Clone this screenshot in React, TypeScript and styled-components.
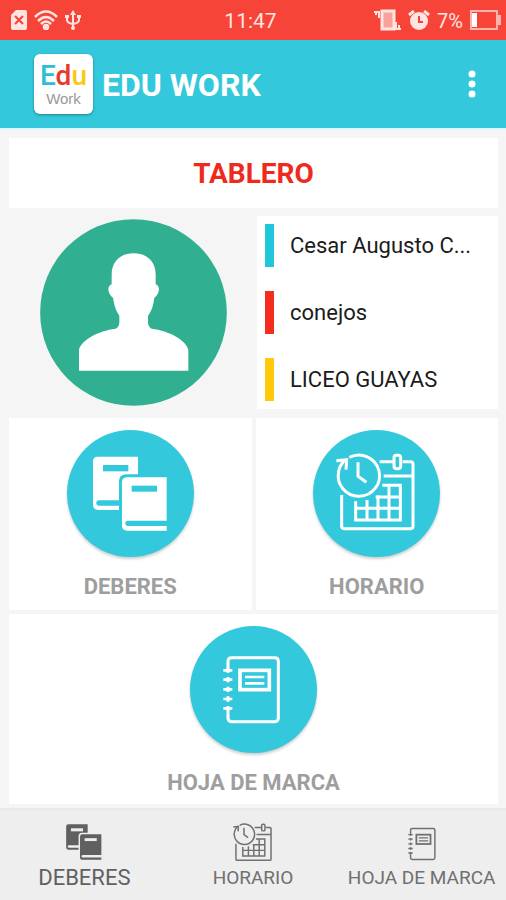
import React from "react";
import styled, { createGlobalStyle } from "styled-components";

const CYAN = "#34c8dc";
const RED = "#f74438";
const PAGE = "#f5f5f5";
const NAV = "#eeeeee";

const GlobalStyle = createGlobalStyle`
  * { box-sizing: border-box; }
  body { margin: 0; background: ${PAGE}; font-family: Roboto, sans-serif; }
  button { font: inherit; border: 0; margin: 0; padding: 0; cursor: pointer; }
  svg { display: block; flex: none; }
`;

const Screen = styled.div`
  min-height: 100vh;
  display: flex;
  flex-direction: column;
`;

const StatusBar = styled.div`
  height: 40px;
  padding: 0 5px 0 0;
  display: grid;
  grid-template-columns: 1fr auto 1fr;
  align-items: center;
  background: ${RED};
  color: #ffe4e1;
`;

const StatusGroup = styled.div<{ $end?: boolean }>`
  display: flex;
  align-items: center;
  gap: 7px;
  padding-left: ${(p) => (p.$end ? 0 : 11)}px;
  justify-content: ${(p) => (p.$end ? "flex-end" : "flex-start")};
`;

const StatusText = styled.span<{ $size: number }>`
  font-size: ${(p) => p.$size}px;
  line-height: 24px;
  padding-top: 2px;
`;

const AppBar = styled.header`
  height: 90px;
  padding: 0 24px 0 34px;
  display: flex;
  align-items: center;
  gap: 9px;
  background: ${CYAN};
  border-bottom: 2px solid #dff6fa;
`;

const Logo = styled.div`
  width: 59px;
  height: 60px;
  padding-top: 9px;
  border-radius: 6px;
  background: #fff;
  box-shadow: 0 1px 3px rgba(0, 0, 0, 0.35);
  text-align: center;
`;

const LogoTop = styled.div`
  font-size: 28px;
  line-height: 26px;
  font-weight: 500;
`;

const LogoLetter = styled.span<{ $color: string }>`
  color: ${(p) => p.$color};
`;

const LogoBottom = styled.div`
  font-family: "Liberation Sans", sans-serif;
  font-size: 15px;
  line-height: 20px;
  color: #999;
`;

const AppTitle = styled.h1`
  margin: 0;
  padding-top: 2px;
  flex: 1;
  font-size: 32px;
  line-height: 40px;
  font-weight: 700;
  color: #fff;
`;

const MenuButton = styled.button`
  width: 20px;
  height: 40px;
  display: flex;
  align-items: center;
  justify-content: center;
  background: none;
  color: #fff;
`;

const Content = styled.main`
  flex: 1;
  padding: 8px 8px 4px 9px;
  display: flex;
  flex-direction: column;
`;

const Heading = styled.h2`
  margin: 0 0 8px;
  padding: 19px 0 17px;
  background: #fff;
  color: #ee2a1c;
  text-align: center;
  font-size: 28px;
  line-height: 34px;
  font-weight: 700;
`;

const Profile = styled.section`
  display: grid;
  grid-template-columns: minmax(0, 248fr) minmax(0, 241fr);
  align-items: center;
  margin-bottom: 9px;
`;

const AvatarCell = styled.div`
  display: flex;
  justify-content: center;
`;

const InfoList = styled.ul`
  margin: 0;
  padding: 8px;
  list-style: none;
  background: #fff;
  display: flex;
  flex-direction: column;
  gap: 24px;
`;

const InfoItem = styled.li<{ $color: string }>`
  height: 43px;
  border-left: 9px solid ${(p) => p.$color};
  padding: 0 16px;
  font-size: 22px;
  line-height: 43px;
  color: #1b1b1b;
  white-space: nowrap;
  overflow: hidden;
  text-overflow: ellipsis;
`;

const Tiles = styled.section`
  flex: 1;
  display: grid;
  grid-template-columns: 1fr 1fr;
  grid-template-rows: 192px auto;
  gap: 4px;
`;

const Tile = styled.button<{ $wide?: boolean }>`
  grid-column: ${(p) => (p.$wide ? "1 / -1" : "auto")};
  padding: 12px 0 7px;
  background: #fff;
  display: flex;
  flex-direction: column;
  align-items: center;
  gap: 16px;
  color: #9e9e9e;
  font-size: 22px;
  line-height: 28px;
  font-weight: 700;
`;

const Disc = styled.span`
  width: 127px;
  height: 127px;
  border-radius: 50%;
  background: ${CYAN};
  color: #fff;
  box-shadow: 0 2px 3px rgba(0, 0, 0, 0.2);
`;

const BottomNav = styled.nav`
  height: 92px;
  display: grid;
  grid-template-columns: repeat(3, 1fr);
  background: ${NAV};
  border-top: 3px solid #e9e9e9;
`;

const NavItem = styled.button<{ $active?: boolean }>`
  display: flex;
  flex-direction: column;
  align-items: center;
  justify-content: flex-end;
  gap: ${(p) => (p.$active ? 6 : 4)}px;
  padding-bottom: 10px;
  background: none;
  color: ${(p) => (p.$active ? "#606060" : "#707070")};
  font-size: ${(p) => (p.$active ? 22 : 19)}px;
  line-height: 24px;
  white-space: nowrap;
`;

type IconProps = { size: number; box: string; height?: number; back: string };

const Books = ({ size, box, back }: IconProps) => (
  <svg width={size} height={size} viewBox={box} aria-hidden="true">
    <path d="M233 100H112Q98 100 98 114V243Q98 260 114 260H234V244H233Z" fill="currentColor" />
    <path d="M240 231H116Q108 231 108 239Q108 247 116 247H240Z" fill={back} />
    <rect x="128" y="125" width="76" height="19" fill={back} />
    <path d="M330 153H196Q176 155 176 173V330H330Z" fill={back} />
    <path d="M319 162H201Q185 162 185 177V306Q185 322 201 322H319V310H319Z" fill="currentColor" />
    <path d="M322 292H203Q195 292 195 300Q195 308 203 308H322Z" fill={back} />
    <rect x="214" y="187" width="76" height="18" fill={back} />
  </svg>
);

const Calendar = ({ size, box }: IconProps) => (
  <svg width={size} height={size} viewBox={box} fill="none" stroke="currentColor" strokeWidth="9" aria-hidden="true">
    <path d="M106 215V309Q106 316 113 316H313Q320 316 320 309V122Q320 115 313 115H289M261 115H220M232 158H320" />
    <rect x="263" y="96" width="20" height="40" rx="7" />
    <path d="M129 102A62 62 0 1 1 97 144Q99 129 113 113" />
    <path d="M90 112L121 109L119 139" />
    <path d="M155 117V159L180 177" />
    <path d="M148 234V290H282V186H228M182 230V290M215 216V290M248 186V290M208 221H282M148 255H282" />
  </svg>
);

const Notebook = ({ size, box, height }: IconProps) => (
  <svg width={size} height={height ?? size} viewBox={box} fill="none" stroke="currentColor" strokeWidth="9" aria-hidden="true">
    <path d="M204 148V126Q204 115 215 115H344Q355 115 355 126V296Q355 307 344 307H215Q204 307 204 296V274" />
    <path d="M190 153H217M190 181H217M190 210H217M190 239H217M190 267H217" strokeWidth="8" />
    <path d="M204 146V160M204 173V189M204 202V218M204 231V247M204 260V276" />
    <rect x="240" y="153" width="88" height="58" strokeWidth="11" />
    <path d="M255 173H313M255 192H313" strokeWidth="8" />
  </svg>
);

const Avatar = () => (
  <svg width="187" height="187" viewBox="118 268 561 561" role="img" aria-label="Foto de perfil">
    <circle cx="398.500" cy="548.500" r="280" fill="#31af91" />
    <path
      fill="#fff"
      d="M235 723V660C242 632 292 603 345 597Q355 591 356 579V558Q342 540 337 504Q325 495 323 480Q323 468 333 464V435C333 397 357 371 399 371C441 371 465 397 465 435V464Q475 468 475 480Q473 495 461 504Q457 540 442 558V579Q443 591 453 597C506 603 556 632 563 660V723Z"
    />
  </svg>
);

const SimIcon = () => (
  <svg width="16" height="20" viewBox="0 0 16 20" aria-hidden="true">
    <path d="M5 0H14Q16 0 16 2V18Q16 20 14 20H2Q0 20 0 18V5Z" fill="currentColor" />
    <path d="M4 6L12 14M12 6L4 14" stroke={RED} strokeWidth="2" />
  </svg>
);

const WifiIcon = () => (
  <svg width="24" height="20" viewBox="0 0 24 20" fill="none" stroke="currentColor" strokeWidth="2.500" aria-hidden="true">
    <path d="M1 7Q12 -4 23 7M4 11Q12 3 20 11M7 14Q12 9 17 14" />
    <circle cx="12" cy="17" r="2" fill="currentColor" />
  </svg>
);

const UsbIcon = () => (
  <svg width="16" height="20" viewBox="0 0 16 20" fill="none" stroke="currentColor" strokeWidth="2" aria-hidden="true">
    <path d="M8 3V18M2 6V10Q2 13 8 14Q14 13 14 10V6" />
    <path d="M5 5L8 0L11 5Z" fill="currentColor" stroke="none" />
    <circle cx="8" cy="18" r="2" fill="currentColor" stroke="none" />
    <path d="M0 5H4V8H0ZM12 5H16V8H12Z" fill="currentColor" stroke="none" />
  </svg>
);

const VibrateIcon = () => (
  <svg width="27" height="22" viewBox="0 0 27 22" fill="none" stroke="currentColor" strokeWidth="2" aria-hidden="true">
    <rect x="8" y="2" width="12" height="18" fill="#f9a19a" strokeWidth="3" />
    <path d="M0 3H6M5 2V9M2 2V6M22 20V13M25 20V16M20 20H27" />
  </svg>
);

const AlarmIcon = () => (
  <svg width="22" height="21" viewBox="0 0 22 21" aria-hidden="true">
    <circle cx="11" cy="11" r="9" fill="currentColor" />
    <path d="M1 5L6 1M21 5L16 1" stroke="currentColor" strokeWidth="3" />
    <path d="M11 6V12H15" fill="none" stroke={RED} strokeWidth="2" />
  </svg>
);

const BatteryIcon = () => (
  <svg width="31" height="20" viewBox="0 0 31 20" aria-hidden="true">
    <rect x="1" y="1" width="26" height="18" fill="none" stroke="#fcb5ae" strokeWidth="2" />
    <rect x="2" y="3" width="5" height="14" fill="#fff" />
    <path d="M28 5H31V15H28Z" fill="#fcb5ae" />
  </svg>
);

const profile = [
  { text: "Cesar Augusto C...", color: "#20c6da" },
  { text: "conejos", color: "#f52d1f" },
  { text: "LICEO GUAYAS", color: "#ffc90a" },
];

const DISC_BOX = "20 20 381 381";

export default function App() {
  return (
    <Screen>
      <GlobalStyle />
      <StatusBar>
        <StatusGroup>
          <SimIcon />
          <WifiIcon />
          <UsbIcon />
        </StatusGroup>
        <StatusText $size={21}>11:47</StatusText>
        <StatusGroup $end>
          <VibrateIcon />
          <AlarmIcon />
          <StatusText $size={20}>7%</StatusText>
          <BatteryIcon />
        </StatusGroup>
      </StatusBar>

      <AppBar>
        <Logo>
          <LogoTop>
            <LogoLetter $color="#2bbfd3">E</LogoLetter>
            <LogoLetter $color="#e8392f">d</LogoLetter>
            <LogoLetter $color="#fbc914">u</LogoLetter>
          </LogoTop>
          <LogoBottom>Work</LogoBottom>
        </Logo>
        <AppTitle>EDU WORK</AppTitle>
        <MenuButton type="button" aria-label="Más opciones">
          <svg width="8" height="28" viewBox="0 0 8 28" fill="currentColor" aria-hidden="true">
            <circle cx="4" cy="4" r="3.500" />
            <circle cx="4" cy="14" r="3.500" />
            <circle cx="4" cy="24" r="3.500" />
          </svg>
        </MenuButton>
      </AppBar>

      <Content>
        <Heading>TABLERO</Heading>
        <Profile>
          <AvatarCell>
            <Avatar />
          </AvatarCell>
          <InfoList>
            {profile.map((item) => (
              <InfoItem key={item.text} $color={item.color}>
                {item.text}
              </InfoItem>
            ))}
          </InfoList>
        </Profile>
        <Tiles>
          <Tile type="button">
            <Disc>
              <Books size={127} box={DISC_BOX} back={CYAN} />
            </Disc>
            DEBERES
          </Tile>
          <Tile type="button">
            <Disc>
              <Calendar size={127} box={DISC_BOX} back={CYAN} />
            </Disc>
            HORARIO
          </Tile>
          <Tile type="button" $wide>
            <Disc>
              <Notebook size={127} box="90 20 381 381" back={CYAN} />
            </Disc>
            HOJA DE MARCA
          </Tile>
        </Tiles>
      </Content>

      <BottomNav>
        <NavItem type="button" $active aria-current="page">
          <Books size={36} box="97 98 226 226" back={NAV} />
          DEBERES
        </NavItem>
        <NavItem type="button">
          <Calendar size={39} box="88 88 238 238" back={NAV} />
          HORARIO
        </NavItem>
        <NavItem type="button">
          <Notebook size={28} height={36} box="188 104 174 214" back={NAV} />
          HOJA DE MARCA
        </NavItem>
      </BottomNav>
    </Screen>
  );
}
